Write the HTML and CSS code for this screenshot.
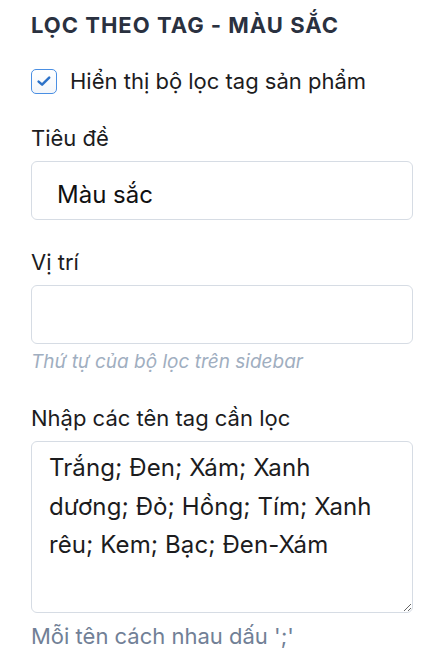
FILE: index.html
```html
<!DOCTYPE html>
<html lang="vi">
<head>
<meta charset="utf-8">
<title>Lọc theo tag - Màu sắc</title>
<link rel="stylesheet" href="styles.css">
</head>
<body>
<section class="panel">
  <h2 class="panel-title">Lọc theo tag - Màu sắc</h2>

  <label class="check-row">
    <span class="checkbox">
      <svg viewBox="0 0 16 16" width="16" height="16" aria-hidden="true"><path d="M2.6 8.6 L6.1 11.6 L13.2 4.6" fill="none" stroke="#2c72c8" stroke-width="2.5" stroke-linecap="round" stroke-linejoin="round"/></svg>
    </span>
    <span class="check-label">Hiển thị bộ lọc tag sản phẩm</span>
  </label>

  <div class="field field-title">
    <label class="field-label">Tiêu đề</label>
    <input class="text-input" type="text" value="Màu sắc">
  </div>

  <div class="field field-pos">
    <label class="field-label">Vị trí</label>
    <input class="text-input" type="text" value="">
    <p class="hint hint-italic">Thứ tự của bộ lọc trên sidebar</p>
  </div>

  <div class="field field-tags">
    <label class="field-label">Nhập các tên tag cần lọc</label>
    <textarea class="text-area">Trắng; Đen; Xám; Xanh
dương; Đỏ; Hồng; Tím; Xanh
rêu; Kem; Bạc; Đen-Xám</textarea>
    <p class="hint hint-plain">Mỗi tên cách nhau dấu ';'</p>
  </div>
</section>
</body>
</html>
```

FILE: styles.css
```css
* { box-sizing: border-box; }

html, body {
  margin: 0;
  padding: 0;
  background: #ffffff;
}

body {
  font-family: Inter, "Noto Sans", "Liberation Sans", sans-serif;
  color: #1c1c1e;
}

.panel {
  padding: 12px 15px 0 31px;
  display: flex;
  flex-direction: column;
}

.panel-title {
  margin: 0;
  font-size: 22px;
  line-height: 26px;
  font-weight: 700;
  letter-spacing: 1px;
  text-transform: uppercase;
  color: #2a3140;
}

.check-row {
  display: flex;
  align-items: center;
  gap: 13px;
  margin-top: 29px;
}

.checkbox {
  width: 26px;
  height: 25px;
  border: 1.5px solid #4a8fe3;
  border-radius: 5px;
  background: linear-gradient(#ffffff, #f3f6fa);
  display: flex;
  align-items: center;
  justify-content: center;
  flex: none;
}

.check-label {
  font-size: 22px;
  line-height: 28px;
  color: #1c1c1e;
}

.field {
  display: flex;
  flex-direction: column;
}

.field-title { margin-top: 29px; }
.field-pos { margin-top: 28px; }
.field-tags { margin-top: 30px; }

.field-label {
  font-size: 22px;
  line-height: 28px;
  color: #1c1c1e;
  margin-bottom: 9px;
}

.text-input {
  height: 59px;
  width: 100%;
  border: 1px solid #d6dce4;
  border-radius: 6px;
  padding: 7px 18px 0 25px;
  font-family: inherit;
  font-size: 24px;
  color: #111111;
  background: #ffffff;
  outline: none;
}

.text-area {
  height: 172px;
  width: 100%;
  border: 1px solid #d6dce4;
  border-radius: 6px;
  padding: 7px 10px 8px 17px;
  font-family: inherit;
  font-size: 24px;
  line-height: 38.5px;
  letter-spacing: 0.1px;
  color: #1c1c1e;
  background: #ffffff;
  resize: vertical;
  white-space: pre;
  overflow: hidden;
  outline: none;
}

.hint {
  margin: 0;
}

.hint-italic {
  margin-top: 6px;
  font-size: 19px;
  line-height: 24px;
  font-style: italic;
  color: #a0aec0;
}

.hint-plain {
  margin-top: 10px;
  font-size: 22px;
  line-height: 27px;
  color: #718096;
}
```
